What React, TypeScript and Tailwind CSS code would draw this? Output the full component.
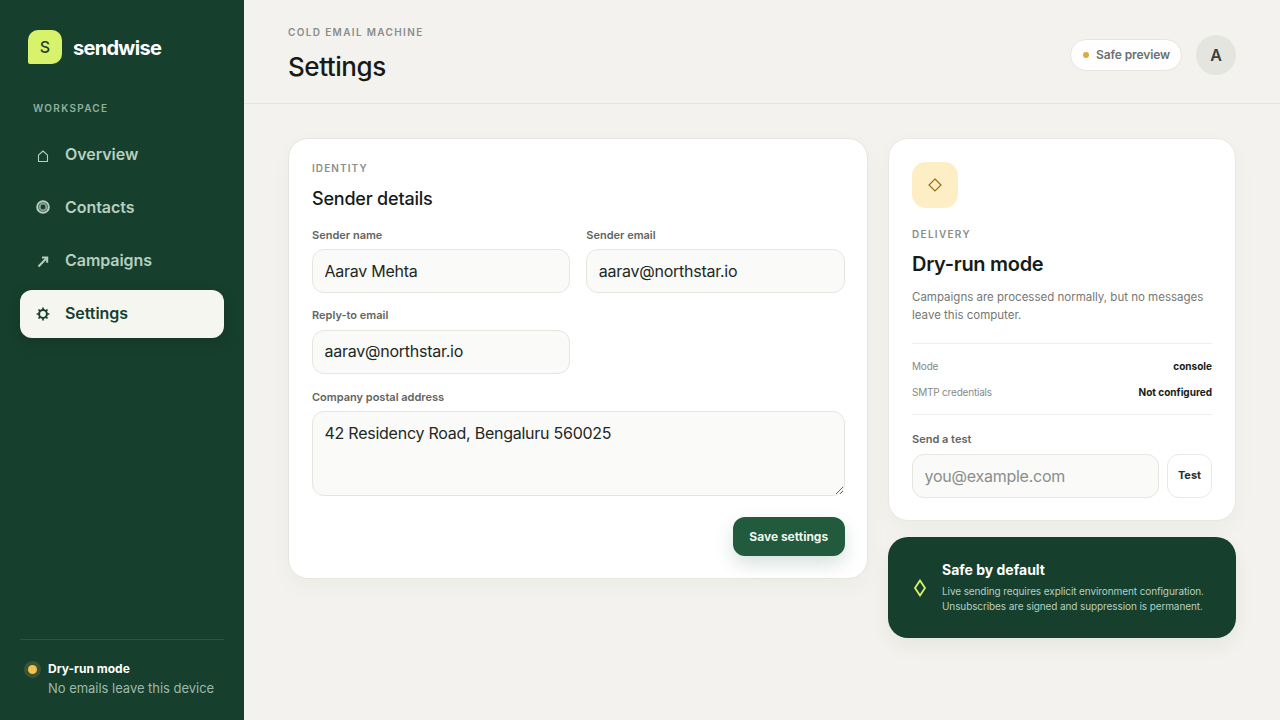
import type { ReactNode } from 'react';

const FONT = "font-['Inter',sans-serif]";

function NavIcon({ children, strokeWidth = 1.3 }: { children: ReactNode; strokeWidth?: number }) {
  return (
    <svg width="16" height="16" viewBox="0 0 16 16" fill="none" stroke="currentColor" strokeWidth={strokeWidth} className="-ml-px">
      {children}
    </svg>
  );
}

const NAV = [
  {
    label: 'Overview',
    icon: (
      <NavIcon strokeWidth={1.1}>
        <path d="M3.5 14.5V8.2L8 4l4.5 4.2v6.3z" strokeLinejoin="round" />
      </NavIcon>
    ),
  },
  {
    label: 'Contacts',
    icon: (
      <NavIcon strokeWidth={2}>
        <circle cx="8" cy="7" r="5.8" />
        <circle cx="8" cy="7" r="3.4" opacity="0.7" />
      </NavIcon>
    ),
  },
  {
    label: 'Campaigns',
    icon: (
      <NavIcon strokeWidth={2}>
        <path d="M3.5 13.5l8-8.2" />
        <path d="M7 4.6h5.2v5.2" />
      </NavIcon>
    ),
  },
  {
    label: 'Settings',
    active: true,
    icon: (
      <NavIcon strokeWidth={2}>
        <circle cx="8" cy="8" r="3.9" />
        <path d="M8 1.6v2M8 12.4v2M1.6 8h2M12.4 8h2M3.5 3.5l1.4 1.4M11.1 11.1l1.4 1.4M3.5 12.5l1.4-1.4M11.1 4.9l1.4-1.4" strokeWidth="1.7" />
      </NavIcon>
    ),
  },
];

function Sidebar() {
  return (
    <aside className="flex h-full w-[244px] shrink-0 flex-col bg-[#173f2d] px-5 pb-[22px] pt-[30px]">
      <div className="flex items-center gap-[11px] pl-2">
        <div className="flex h-[34px] w-[34px] items-center justify-center rounded-[10px] rounded-bl-[2px] bg-[#d9f26b] text-[16px] font-medium text-[#173f2d]">
          S
        </div>
        <span className="pt-[2px] text-[20px] font-bold tracking-[-0.7px] text-white">sendwise</span>
      </div>
      <div className="mb-[16px] mt-[37px] pl-[13px] text-[10px] font-semibold leading-[14px] tracking-[1.3px] text-[#8fb09f]">
        WORKSPACE
      </div>
      <nav className="flex flex-col gap-[5px]">
        {NAV.map((item) => (
          <div
            key={item.label}
            className={
              item.active
                ? 'flex h-12 items-center rounded-xl bg-[#f6f6f1] pl-4 text-[16px] font-semibold tracking-[-0.05px] text-[#173f2d] shadow-[0_4px_14px_rgba(0,0,0,0.15)]'
                : 'flex h-12 items-center rounded-xl pl-4 text-[16px] font-semibold tracking-[-0.05px] text-[#b5cfc0]'
            }
          >
            <span className="flex w-[29px]">{item.icon}</span>
            <span className="pb-[3px]">{item.label}</span>
          </div>
        ))}
      </nav>
      <div className="mt-auto border-t border-[#2a5340] pt-[20px]">
        <div className="flex pl-[8px]">
          <span className="mt-[5px] h-[9px] w-[9px] shrink-0 rounded-full bg-[#f4c04e] shadow-[0_0_0_4px_rgba(244,192,78,0.16)]" />
          <div className="ml-[11px]">
            <div className="text-[12px] font-bold leading-[18px] text-white">Dry-run mode</div>
            <div className="text-[13px] leading-[20px] tracking-[-0.03px] text-[#9db8aa]">No emails leave this device</div>
          </div>
        </div>
      </div>
    </aside>
  );
}

const inputCls =
  'h-[44px] w-full rounded-[12px] border border-[#e6e5e0] bg-[#fafaf8] pb-[1px] pl-[11.5px] pr-3 text-[16px] tracking-[-0.25px] text-[#222824] outline-none placeholder:text-[#8a8e8a]';
const labelCls = 'block text-[11px] font-semibold leading-[16px] text-[#5f6661]';

function Identity() {
  return (
    <section className="h-[441px] w-[580px] shrink-0 rounded-[20px] border border-[#e6e5df] bg-white pl-[23px] pr-[22.5px] pt-[22px] shadow-[0_8px_24px_rgba(30,50,40,0.03)]">
      <div className="text-[10px] font-semibold leading-[14px] tracking-[1.1px] text-[#8a8e8a]">IDENTITY</div>
      <h2 className="mt-[10px] text-[18px] font-medium leading-[28px] tracking-[-0.2px] text-[#161b18]">Sender details</h2>
      <div className="mt-[14px] grid grid-cols-2 gap-x-4">
        <div>
          <label className={labelCls}>Sender name</label>
          <input className={`${inputCls} mt-[6px]`} defaultValue="Aarav Mehta" />
        </div>
        <div>
          <label className={labelCls}>Sender email</label>
          <input className={`${inputCls} mt-[6px]`} defaultValue="aarav@northstar.io" />
        </div>
        <div className="mt-[14px]">
          <label className={labelCls}>Reply-to email</label>
          <input className={`${inputCls} mt-[7px] pb-[2px]`} defaultValue="aarav@northstar.io" />
        </div>
      </div>
      <div className="mt-[15px]">
        <label className={labelCls}>Company postal address</label>
        <textarea
          className="mt-[6px] block h-[85px] w-full rounded-[12px] border border-[#e6e5e0] bg-[#fafaf8] pb-[10px] pl-[11.5px] pr-3 pt-[9px] text-[16px] tracking-[-0.25px] text-[#222824] outline-none"
          defaultValue="42 Residency Road, Bengaluru 560025"
        />
      </div>
      <div className="mt-[21px] flex justify-end">
        <button className="h-[39px] w-[111.5px] rounded-[12px] bg-[#215a3d] text-[12px] font-bold text-[#eef5ee] shadow-[0_8px_18px_rgba(33,90,61,0.18)]">
          Save settings
        </button>
      </div>
    </section>
  );
}

function Row({ label, value }: { label: string; value: string }) {
  return (
    <div className="flex h-[26.5px] items-center justify-between">
      <span className="text-[10px] tracking-[-0.2px] text-[#868a86]">{label}</span>
      <span className="text-[10px] font-bold text-[#161b18]">{value}</span>
    </div>
  );
}

function Delivery() {
  return (
    <section className="h-[383px] rounded-[20px] border border-[#e9e8e2] bg-white px-[23px] pt-[23px] shadow-[0_8px_24px_rgba(30,50,40,0.03)]">
      <div className="flex h-[46px] w-[46px] items-center justify-center rounded-[14px] bg-[#fdeec6]">
        <svg width="14" height="14" viewBox="0 0 14 14" fill="none" stroke="#9a6d14" strokeWidth="1.2">
          <path d="M7 1l6 6-6 6-6-6z" />
        </svg>
      </div>
      <div className="mt-[19px] text-[10px] font-semibold leading-[14px] tracking-[1.3px] text-[#8a8e8a]">DELIVERY</div>
      <h3 className="mt-[9px] text-[20px] font-semibold leading-[28px] tracking-[-0.3px] text-[#161b18]">Dry-run mode</h3>
      <p className="mt-[10px] text-[11.5px] leading-[18px] text-[#747874]">
        Campaigns are processed normally, but no messages leave this computer.
      </p>
      <div className="mt-[19px] border-y border-[#efeeea] pb-[8px] pt-[9px]">
        <Row label="Mode" value="console" />
        <Row label="SMTP credentials" value="Not configured" />
      </div>
      <label className={`${labelCls} mt-[16px]`}>Send a test</label>
      <div className="mt-[7px] flex gap-2">
        <input className={`${inputCls} min-w-0 flex-1`} placeholder="you@example.com" />
        <button className="h-[44px] w-[45px] shrink-0 rounded-[12px] border border-[#e9e8e2] bg-white pb-[1px] text-[11px] font-bold text-[#2b302d]">
          Test
        </button>
      </div>
    </section>
  );
}

function SafeNote() {
  return (
    <section className="flex h-[101px] items-center rounded-[20px] bg-[#173f2d] pl-[25px] shadow-[0_8px_20px_rgba(30,50,40,0.06)]">
      <svg width="14" height="18" viewBox="0 0 14 18" fill="none" stroke="#d9f26b" strokeWidth="1.8" className="shrink-0">
        <path d="M7 1.5l5 7.5-5 7.5-5-7.5z" />
      </svg>
      <div className="ml-[15px] pb-[2px]">
        <div className="text-[14px] font-bold leading-[20px] text-white">Safe by default</div>
        <p className="mt-[4px] text-[10px] leading-[15px] tracking-[-0.1px] text-[#b5cfc0]">
          Live sending requires explicit environment configuration.
          <br />
          Unsubscribes are signed and suppression is permanent.
        </p>
      </div>
    </section>
  );
}

export default function App() {
  return (
    <div className={`flex h-[720px] w-[1280px] overflow-hidden bg-[#f3f2ee] ${FONT}`}>
      <Sidebar />
      <main className="flex min-w-0 flex-1 flex-col">
        <header className="flex h-[104px] shrink-0 items-center justify-between border-b border-[#e6e5df] pl-[44px] pr-[44px] pt-[7px]">
          <div>
            <div className="text-[10px] font-semibold leading-[14px] tracking-[1.35px] text-[#8a8e8a]">COLD EMAIL MACHINE</div>
            <h1 className="mt-[10px] text-[26px] font-medium leading-[36px] tracking-[-0.45px] text-[#161b18]">Settings</h1>
          </div>
          <div className="flex items-center gap-[14px]">
            <div className="flex h-[32px] w-[112px] items-center rounded-full border border-[#e6e5df] bg-white pl-3 text-[12px] font-semibold tracking-[-0.1px] text-[#6c716d]">
              <span className="mr-[7px] h-[6px] w-[6px] rounded-full bg-[#e0a93b]" />
              Safe preview
            </div>
            <div className="flex h-10 w-10 items-center justify-center rounded-full bg-[#e4e5df] text-[16px] font-semibold text-[#3a413c]">
              A
            </div>
          </div>
        </header>
        <div className="flex gap-5 pl-[44px] pr-[44px] pt-[34px]">
          <Identity />
          <div className="flex min-w-0 flex-1 flex-col gap-4">
            <Delivery />
            <SafeNote />
          </div>
        </div>
      </main>
    </div>
  );
}
